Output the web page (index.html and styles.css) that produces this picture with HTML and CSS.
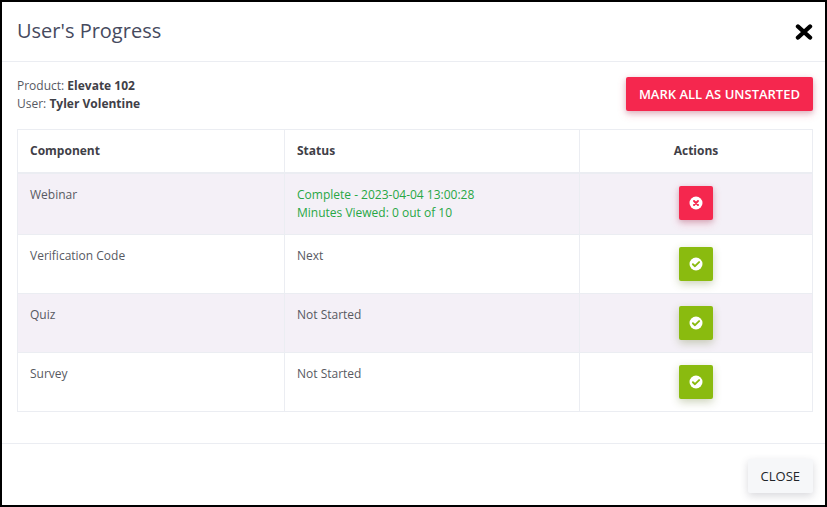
FILE: index.html
```html
<!DOCTYPE html>
<html lang="en">
<head>
    <meta charset="UTF-8">
    <meta name="viewport" content="width=device-width, initial-scale=1.0">
    <title>User's Progress</title>
    <link rel="stylesheet" href="styles.css">
</head>
<body>

<div class="modal">
    <div class="modal-header">
        <h2>User's Progress</h2>
        <button class="close-x" aria-label="Close">
            <svg width="18" height="16" viewBox="0 0 18 16"><path d="M3 2.5 L15 13.5 M15 2.5 L3 13.5" stroke="#000" stroke-width="4.4" stroke-linecap="round" fill="none"/></svg>
        </button>
    </div>

    <div class="modal-body">
        <div class="info-row">
            <div class="info">
                <div>Product: <b>Elevate 102</b></div>
                <div>User: <b>Tyler Volentine</b></div>
            </div>
            <button class="btn btn-red btn-mark">MARK ALL AS UNSTARTED</button>
        </div>

        <table class="progress-table">
            <thead>
                <tr>
                    <th class="col-component">Component</th>
                    <th class="col-status">Status</th>
                    <th class="col-actions">Actions</th>
                </tr>
            </thead>
            <tbody>
                <tr class="odd row-webinar">
                    <td>Webinar</td>
                    <td class="complete">Complete - 2023-04-04 13:00:28<br>Minutes Viewed: 0 out of 10</td>
                    <td class="action">
                        <button class="icon-btn btn-red">
                            <svg width="14" height="14" viewBox="0 0 14 14"><circle cx="7" cy="7" r="6.5" fill="#fff"/><path d="M5 5 L9 9 M9 5 L5 9" stroke="#f5274e" stroke-width="1.9" stroke-linecap="round"/></svg>
                        </button>
                    </td>
                </tr>
                <tr>
                    <td>Verification Code</td>
                    <td>Next</td>
                    <td class="action">
                        <button class="icon-btn btn-green">
                            <svg width="14" height="14" viewBox="0 0 14 14"><circle cx="7" cy="7" r="6.5" fill="#fff"/><path d="M3.9 7.2 L6 9.2 L10.1 5.1" stroke="#8abb0f" stroke-width="1.9" stroke-linecap="round" stroke-linejoin="round" fill="none"/></svg>
                        </button>
                    </td>
                </tr>
                <tr class="odd">
                    <td>Quiz</td>
                    <td>Not Started</td>
                    <td class="action">
                        <button class="icon-btn btn-green">
                            <svg width="14" height="14" viewBox="0 0 14 14"><circle cx="7" cy="7" r="6.5" fill="#fff"/><path d="M3.9 7.2 L6 9.2 L10.1 5.1" stroke="#8abb0f" stroke-width="1.9" stroke-linecap="round" stroke-linejoin="round" fill="none"/></svg>
                        </button>
                    </td>
                </tr>
                <tr>
                    <td>Survey</td>
                    <td>Not Started</td>
                    <td class="action">
                        <button class="icon-btn btn-green">
                            <svg width="14" height="14" viewBox="0 0 14 14"><circle cx="7" cy="7" r="6.5" fill="#fff"/><path d="M3.9 7.2 L6 9.2 L10.1 5.1" stroke="#8abb0f" stroke-width="1.9" stroke-linecap="round" stroke-linejoin="round" fill="none"/></svg>
                        </button>
                    </td>
                </tr>
            </tbody>
        </table>
    </div>

    <div class="modal-footer">
        <button class="btn btn-light">CLOSE</button>
    </div>
</div>

</body>
</html>
```

FILE: styles.css
```css
html, body {
    height: 100%;
}
body {
    font-family: "Open Sans", Arial, sans-serif;
    font-size: 12px;
    line-height: 18px;
    color: #575962;
    margin: 0;
    padding: 0;
    background-color: #000;
}
button {
    font-family: inherit;
    border: none;
    cursor: pointer;
}
.modal {
    box-sizing: border-box;
    height: 503px;
    margin: 2px;
    background-color: #fff;
}
.modal-header {
    display: flex;
    justify-content: space-between;
    align-items: center;
    box-sizing: border-box;
    height: 60px;
    padding: 0 12px 2px 15px;
    border-bottom: 1px solid #ebedf2;
}
.modal-header h2 {
    margin: 0;
    font-size: 20px;
    font-weight: 400;
    line-height: 26px;
    color: #464a5e;
}
.close-x {
    display: flex;
    padding: 0;
    background: none;
    margin-top: 3px;
}
.modal-body {
    box-sizing: border-box;
    height: 382px;
    padding: 15px 12px 0 15px;
    border-bottom: 1px solid #ebedf2;
}
.info-row {
    display: flex;
    justify-content: space-between;
    align-items: flex-start;
    height: 52px;
}
.info b {
    font-weight: 700;
    color: #3f4047;
}
.btn {
    border-radius: 2px;
    font-size: 13px;
    line-height: 18px;
}
.btn-red {
    background-color: #f5274e;
    color: #fff;
    box-shadow: 0 3px 8px rgba(245, 39, 78, 0.25), 0 2px 5px rgba(60, 60, 80, 0.2);
}
.btn-green {
    background-color: #8abb0f;
    box-shadow: 0 3px 8px rgba(90, 110, 30, 0.3);
}
.btn-mark {
    height: 34px;
    padding: 0 13px;
    font-weight: 600;
}
.btn-light {
    height: 34px;
    padding: 0 13px;
    background-color: #f6f7f9;
    color: #212529;
    box-shadow: 0 3px 8px rgba(60, 60, 80, 0.2);
}
.progress-table {
    width: 796px;
    border-collapse: collapse;
    table-layout: fixed;
    border: 1px solid #ebedf2;
}
.progress-table th,
.progress-table td {
    border: 1px solid #ebedf2;
    padding: 12px;
    text-align: left;
    vertical-align: top;
}
.progress-table th {
    height: 18px;
    font-weight: 700;
    color: #3f4047;
    border-bottom-width: 2px;
    padding-top: 12px;
    padding-bottom: 12px;
}
.col-component {
    width: 242px;
}
.col-status {
    width: 270px;
}
.progress-table th.col-actions {
    text-align: center;
}
.progress-table tbody td {
    height: 34px;
}
.progress-table tbody td.action {
    padding-bottom: 12px;
    text-align: center;
}
.odd {
    background-color: #f4f0f7;
}
.complete {
    color: #28a745;
}
.icon-btn {
    display: inline-flex;
    justify-content: center;
    align-items: center;
    vertical-align: top;
    width: 34px;
    height: 34px;
    padding: 0;
    border-radius: 2px;
}
.modal-footer {
    display: flex;
    justify-content: flex-end;
    padding: 15px 12px;
}
```
